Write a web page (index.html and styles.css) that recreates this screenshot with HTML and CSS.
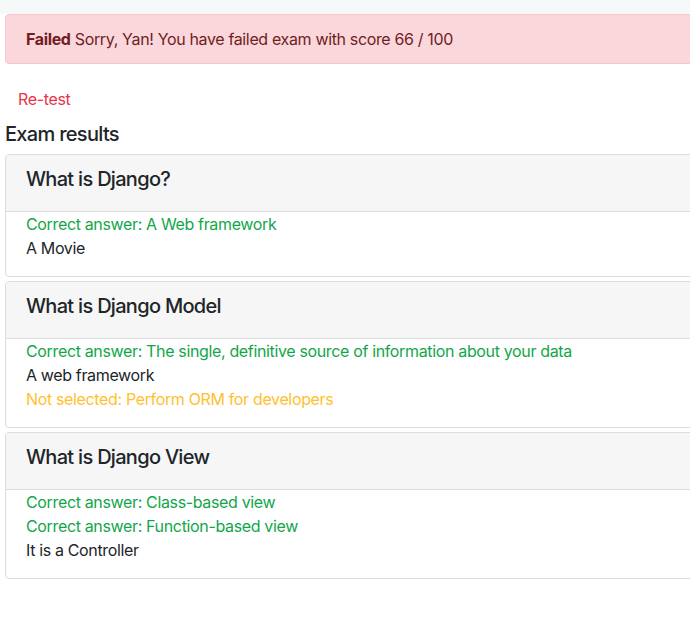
FILE: index.html
```html
<!DOCTYPE html>
<html lang="en">
<head>
<meta charset="utf-8">
<title>Exam results</title>
<link rel="stylesheet" href="styles.css">
</head>
<body>
<div class="topbar"></div>
<div class="viewport">
<main class="content">
  <div class="alert"><strong>Failed</strong> Sorry, Yan! You have failed exam with score 66 / 100</div>
  <a class="btn-link" href="#">Re-test</a>
  <h5 class="section-title">Exam results</h5>

  <div class="card">
    <div class="card-header"><h5 class="q-title">What is Django?</h5></div>
    <div class="card-body">
      <div class="ans correct">Correct answer: A Web framework</div>
      <div class="ans">A Movie</div>
    </div>
  </div>

  <div class="card">
    <div class="card-header"><h5 class="q-title">What is Django Model</h5></div>
    <div class="card-body">
      <div class="ans correct">Correct answer: The single, definitive source of information about your data</div>
      <div class="ans">A web framework</div>
      <div class="ans missed">Not selected: Perform ORM for developers</div>
    </div>
  </div>

  <div class="card">
    <div class="card-header"><h5 class="q-title">What is Django View</h5></div>
    <div class="card-body">
      <div class="ans correct">Correct answer: Class-based view</div>
      <div class="ans correct">Correct answer: Function-based view</div>
      <div class="ans">It is a Controller</div>
    </div>
  </div>
</main>
</div>
</body>
</html>
```
FILE: styles.css
```css
html, body {
  margin: 0;
  padding: 0;
  background: #fff;
  overflow: hidden;
}
body {
  font-family: Inter, "Liberation Sans", Arial, sans-serif;
  font-size: 16px;
  line-height: 24px;
  letter-spacing: -0.35px;
  color: #212529;
}
.topbar {
  height: 14px;
  background: #f7f8fa;
}
.viewport {
  width: 690px;
  overflow: hidden;
}
.content {
  width: 735px;
  padding-left: 5px;
  display: flex;
  flex-direction: column;
  align-items: flex-start;
}
.alert {
  align-self: stretch;
  box-sizing: border-box;
  height: 50px;
  padding: 12px 20px;
  background: #f9d7da;
  border: 1px solid #f5c6cb;
  border-radius: 4px;
  color: #721c24;
  margin-bottom: 16px;
}
.alert strong { font-weight: 700; }
.btn-link {
  display: inline-block;
  padding: 7px 13px;
  color: #e63448;
  text-decoration: none;
  line-height: 24px;
}
.section-title {
  margin: 4px 0 8px;
  font-size: 20px;
  font-weight: 500;
  line-height: 24px;
  letter-spacing: -0.7px;
  color: #212529;
}
.card {
  align-self: stretch;
  border: 1px solid #dcdcdc;
  border-radius: 4px;
  margin-bottom: 4px;
  overflow: hidden;
}
.card-header {
  background: #f6f6f6;
  border-bottom: 1px solid #dcdcdc;
  padding: 12px 20px;
}
.q-title {
  margin: 0 0 8px;
  font-size: 20px;
  font-weight: 500;
  line-height: 24px;
  letter-spacing: -0.7px;
}
.card-body {
  padding: 0 20px 16px;
}
.ans { line-height: 24px; }
.correct { color: #12a64a; }
.missed { color: #ffbf2e; }
```
